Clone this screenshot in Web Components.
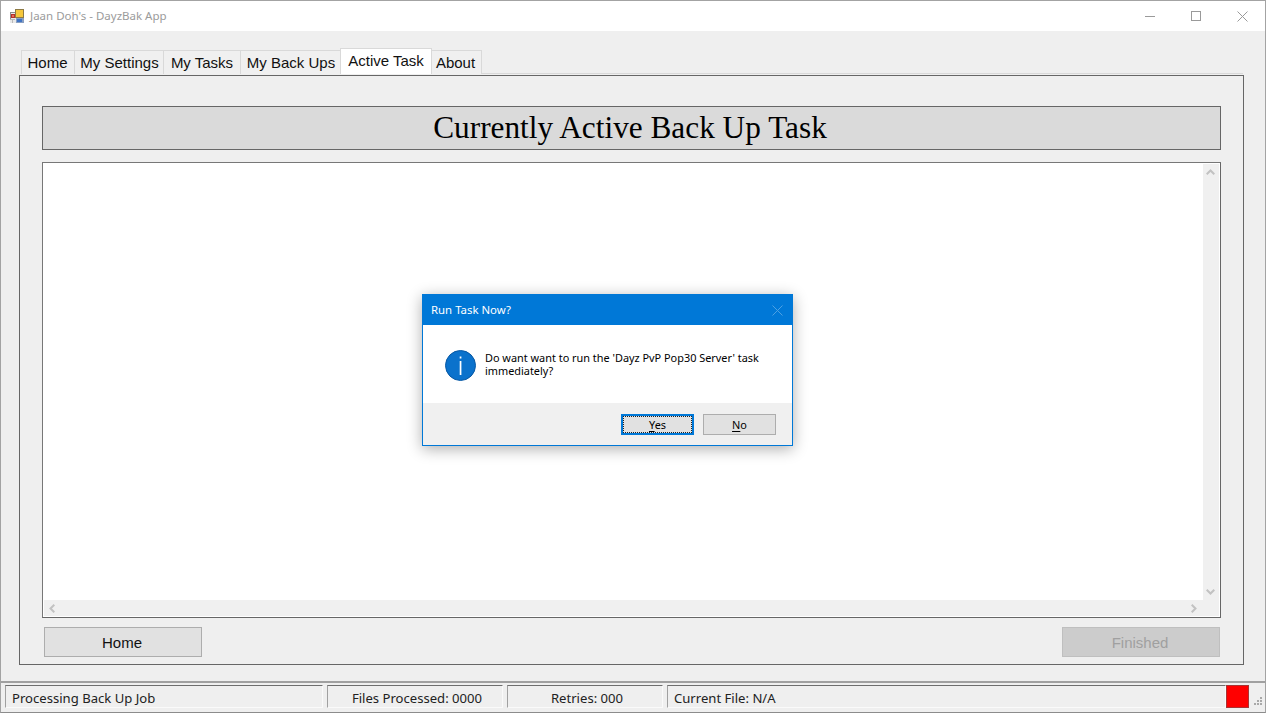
<!DOCTYPE html>
<html>
<head>
<meta charset="utf-8">
<title>DayzBak App</title>
<style>
    html, body { margin: 0; height: 100%; overflow: hidden; background: #f0f0f0; }
</style>
</head>
<body>
<app-window>
    <title-bar slot="title">Jaan Doh's - DayzBak App</title-bar>
    <tab-strip slot="tabs">
        <tab-item style="width:54px;padding-right:1px">Home</tab-item>
        <tab-item style="width:90px;padding-left:1px">My Settings</tab-item>
        <tab-item style="width:78px">My Tasks</tab-item>
        <tab-item style="width:101px;padding-left:1px">My Back Ups</tab-item>
        <tab-item style="width:92px" active>Active Task</tab-item>
        <tab-item style="width:51px;padding-right:2px">About</tab-item>
    </tab-strip>
    <task-panel slot="panel">
        <flat-button slot="left">Home</flat-button>
        <flat-button slot="right" disabled>Finished</flat-button>
    </task-panel>
    <status-strip slot="status">
        <status-label style="width:318px" align="left">Processing Back Up Job</status-label>
        <status-label style="width:176px">Files Processed: 0000</status-label>
        <status-label style="width:156px">Retries: 000</status-label>
        <status-label style="width:559px" align="left">Current File: N/A</status-label>
    </status-strip>
</app-window>
<message-box heading="Run Task Now?">
    Do want want to run the 'Dayz PvP Pop30 Server' task immediately?
</message-box>

<script>
class AppWindow extends HTMLElement {
    constructor() {
        super();
        this.attachShadow({ mode: 'open' });
        this.shadowRoot.innerHTML = `
        <style>
            :host {
                display: flex;
                flex-direction: column;
                box-sizing: border-box;
                width: 1266px;
                height: 713px;
                border: 1px solid #a3a3a3;
                border-bottom-color: #8c8c8c;
                background: #efefef;
            }
            .main { flex: 1; display: flex; flex-direction: column; min-height: 0; padding: 17px 22px 17px 18px; }
        </style>
        <slot name="title"></slot>
        <div class="main">
            <slot name="tabs"></slot>
            <slot name="panel"></slot>
        </div>
        <slot name="status"></slot>
        `;
    }
}

class TitleBar extends HTMLElement {
    constructor() {
        super();
        this.attachShadow({ mode: 'open' });
        this.shadowRoot.innerHTML = `
        <style>
            :host {
                display: flex;
                align-items: center;
                height: 30px;
                flex: none;
                background: #fff;
                color: #9b9b9b;
                font: 11.5px "Noto Sans", sans-serif;
            }
            .icon { margin-left: 9px; margin-right: 6px; }
            .text { flex: 1; position: relative; top: -1px; }
            .ctl { width: 46px; height: 30px; display: flex; align-items: center; justify-content: center; }
        </style>
        <svg class="icon" width="14" height="14" viewBox="0 0 14 14" shape-rendering="crispEdges">
            <rect x="0" y="3" width="6" height="11" fill="#e9e9e9"/>
            <rect x="0" y="3" width="6" height="1" fill="#8c8c8c"/>
            <rect x="0" y="3" width="1" height="7" fill="#8c8c8c"/>
            <rect x="5" y="0" width="9" height="9" fill="#8d7a45"/>
            <rect x="6" y="1" width="7" height="7" fill="#f5c73c"/>
            <rect x="1" y="5" width="4" height="4" fill="#b5302a"/>
            <rect x="2" y="6" width="2" height="2" fill="#e66a55"/>
            <rect x="6" y="9" width="8" height="5" fill="#8a9fc0"/>
            <rect x="7" y="10" width="5" height="3" fill="#3f73c4"/>
            <rect x="0" y="10" width="5" height="1" fill="#b9b9b9"/>
            <rect x="2" y="10" width="1" height="4" fill="#b9b9b9"/>
        </svg>
        <span class="text"><slot></slot></span>
        <span class="ctl"><svg width="10" height="10" viewBox="0 0 10 10" shape-rendering="crispEdges"><rect x="0" y="5" width="10" height="1" fill="#9a9a9a"/></svg></span>
        <span class="ctl"><svg width="10" height="10" viewBox="0 0 10 10" shape-rendering="crispEdges"><rect x=".5" y=".5" width="9" height="9" fill="none" stroke="#9a9a9a"/></svg></span>
        <span class="ctl"><svg width="11" height="11" viewBox="0 0 11 11"><path d="M.5.5l10 10M10.5.5l-10 10" fill="none" stroke="#9a9a9a"/></svg></span>
        `;
    }
}

class TabStrip extends HTMLElement {
    constructor() {
        super();
        this.attachShadow({ mode: 'open' });
        this.shadowRoot.innerHTML = `
        <style>
            :host {
                display: flex;
                flex: none;
                align-items: flex-end;
                height: 26px;
                margin-left: 2px;
                box-sizing: border-box;
                border-bottom: 1px solid #d9d9d9;
            }
        </style>
        <slot></slot>
        `;
    }
}

class TabItem extends HTMLElement {
    constructor() {
        super();
        this.attachShadow({ mode: 'open' });
        this.shadowRoot.innerHTML = `
        <style>
            :host {
                display: block;
                flex: none;
                box-sizing: border-box;
                height: 24px;
                margin-bottom: -1px;
                border: 1px solid #d9d9d9;
                border-bottom: 0;
                margin-right: -1px;
                background: #f0f0f0;
                color: #111;
                text-align: center;
                font: 15px/23px "Liberation Sans", sans-serif;
                white-space: nowrap;
            }
            :host([active]) {
                position: relative;
                z-index: 1;
                height: 26px;
                background: #fff;
                line-height: 24px;
            }
        </style>
        <slot></slot>
        `;
    }
}

class TaskPanel extends HTMLElement {
    constructor() {
        super();
        this.attachShadow({ mode: 'open' });
        this.shadowRoot.innerHTML = `
        <style>
            :host {
                display: flex;
                flex-direction: column;
                box-sizing: border-box;
                height: 590px;
                width: 1225px;
                margin-top: 1px;
                padding: 30px 22px 7px 22px;
                border: 1px solid #666;
            }
            .head {
                box-sizing: border-box;
                height: 44px;
                flex: none;
                padding-right: 3px;
                border: 1px solid #666;
                background: #dadada;
                color: #000;
                text-align: center;
                font: 31.3px/41px "Liberation Serif", serif;
            }
            .box {
                box-sizing: border-box;
                height: 456px;
                margin-top: 12px;
                flex: none;
                border: 1px solid #777;
                border-right-color: #666;
                border-bottom-color: #666;
                background: #fff;
                padding: 1px 0 0 1px;
                display: grid;
                grid-template-columns: 1fr 17px;
                grid-template-rows: 1fr 17px;
            }
            .content { background: #fff; }
            .bar { background: #f0f0f0; display: flex; justify-content: space-between; align-items: center; }
            .v { flex-direction: column; padding: 5px 2px 5px 0; margin-right: 1px; }
            .h { padding: 0 6px 0 5px; margin-bottom: 1px; }
            .corner { background: #f0f0f0; margin: 0 1px 1px 0; }
            .btns { display: flex; justify-content: space-between; padding: 9px 1px 0 2px; }
        </style>
        <div class="head">Currently Active Back Up Task</div>
        <div class="box">
            <div class="content"></div>
            <div class="bar v">
                <svg width="9" height="6" viewBox="0 0 9 6"><path d="M.7 5.3l3.8-3.8 3.8 3.8" fill="none" stroke="#c2c2c2" stroke-width="2"/></svg>
                <svg width="9" height="6" viewBox="0 0 9 6"><path d="M.7.7l3.8 3.8 3.8-3.8" fill="none" stroke="#c2c2c2" stroke-width="2"/></svg>
            </div>
            <div class="bar h">
                <svg width="6" height="9" viewBox="0 0 6 9"><path d="M5.3.7L1.5 4.5l3.8 3.8" fill="none" stroke="#c2c2c2" stroke-width="2"/></svg>
                <svg width="6" height="9" viewBox="0 0 6 9"><path d="M.7.7l3.8 3.8L.7 8.3" fill="none" stroke="#c2c2c2" stroke-width="2"/></svg>
            </div>
            <div class="corner"></div>
        </div>
        <div class="btns">
            <slot name="left"></slot>
            <slot name="right"></slot>
        </div>
        `;
    }
}

class FlatButton extends HTMLElement {
    constructor() {
        super();
        this.attachShadow({ mode: 'open' });
        this.shadowRoot.innerHTML = `
        <style>
            :host {
                display: block;
                box-sizing: border-box;
                width: 158px;
                height: 30px;
                padding-right: 2px;
                border: 1px solid #adadad;
                background: #e1e1e1;
                color: #111;
                text-align: center;
                font: 15px/29px "Liberation Sans", sans-serif;
            }
            :host([disabled]) {
                background: #cccccc;
                border-color: #bfbfbf;
                color: #a0a0a0;
            }
        </style>
        <slot></slot>
        `;
    }
}

class StatusStrip extends HTMLElement {
    constructor() {
        super();
        this.attachShadow({ mode: 'open' });
        this.shadowRoot.innerHTML = `
        <style>
            :host {
                display: flex;
                flex: none;
                box-sizing: border-box;
                height: 31px;
                padding: 2px 0 0 4px;
                gap: 4px;
                border-top: 2px solid #a0a0a0;
            }
            .rest { display: flex; margin-left: -4px; }
            .led {
                box-sizing: border-box;
                width: 23px;
                height: 23px;
                background: #ff0000;
                border: 1px solid #a83434;
            }
            .grip { width: 15px; height: 23px; display: flex; align-items: flex-end; justify-content: flex-end; }
        </style>
        <slot></slot>
        <div class="rest">
            <div class="led"></div>
            <div class="grip">
                <svg width="11" height="11" viewBox="0 0 11 11" shape-rendering="crispEdges" style="margin:0 1px 2px 0">
                    <path d="M8 2h2v2H8zM5 5h2v2H5zM8 5h2v2H8zM2 8h2v2H2zM5 8h2v2H5zM8 8h2v2H8z" fill="#a9a9a9"/>
                </svg>
            </div>
        </div>
        `;
    }
}

class StatusLabel extends HTMLElement {
    constructor() {
        super();
        this.attachShadow({ mode: 'open' });
        this.shadowRoot.innerHTML = `
        <style>
            :host {
                display: block;
                flex: none;
                box-sizing: border-box;
                height: 23px;
                padding: 0 4px 0 8px;
                border: 1px solid;
                border-color: #6e6e6e #fafafa #fafafa #a0a0a0;
                color: #222;
                text-align: center;
                font: 13.1px/24px "Noto Sans", sans-serif;
                white-space: nowrap;
            }
            :host([align="left"]) { text-align: left; padding: 0 6px; }
        </style>
        <slot></slot>
        `;
    }
}

class MessageBox extends HTMLElement {
    constructor() {
        super();
        this.attachShadow({ mode: 'open' });
        this.shadowRoot.innerHTML = `
        <style>
            :host {
                position: absolute;
                left: 422px;
                top: 294px;
                width: 371px;
                height: 152px;
                box-sizing: border-box;
                display: flex;
                flex-direction: column;
                border: 1px solid #0078d7;
                background: #fff;
                box-shadow: 0 3px 14px rgba(0,0,0,.32);
                font: 10.9px "Noto Sans", sans-serif;
            }
            .cap {
                display: flex;
                align-items: center;
                justify-content: space-between;
                height: 30px;
                padding: 0 9px 0 8px;
                background: #0078d7;
                color: #fff;
                font-size: 11.4px;
                flex: none;
            }
            .cap span { position: relative; top: -1px; }
            .body {
                flex: 1;
                display: flex;
                gap: 9px;
                padding: 25px 20px 0 22px;
                color: #000;
                line-height: 13px;
            }
            .msg { padding-top: 1px; }
            .foot {
                flex: none;
                height: 42px;
                display: flex;
                justify-content: flex-end;
                gap: 9px;
                box-sizing: border-box;
                padding: 11px 16px 0 0;
                background: #f0f0f0;
            }
            .btn {
                box-sizing: border-box;
                width: 73px;
                height: 21px;
                border: 1px solid #adadad;
                background: #e1e1e1;
                text-align: center;
                color: #000;
                line-height: 20px;
                position: relative;
            }
            .btn.def { border: 2px solid #0078d7; line-height: 18px; }
            .btn.def::after { content: ""; position: absolute; inset: 0; border: 1px dotted #222; }
            u { text-underline-offset: 2px; }
        </style>
        <div class="cap">
            <span>${this.getAttribute('heading')}</span>
            <svg width="11" height="11" viewBox="0 0 11 11"><path d="M.5.5l10 10M10.5.5l-10 10" fill="none" stroke="#4da1e3"/></svg>
        </div>
        <div class="body">
            <svg width="31" height="31" viewBox="0 0 31 31" style="flex:none">
                <circle cx="15.5" cy="15.5" r="15" fill="#0a6cc4" stroke="#0b5ba6"/>
                <circle cx="15.5" cy="15.5" r="14" fill="#0b72cc"/>
                <rect x="14.7" y="6.5" width="1.7" height="2" fill="#fff"/>
                <rect x="14.7" y="11" width="1.7" height="14" fill="#fff"/>
            </svg>
            <div class="msg"><slot></slot></div>
        </div>
        <div class="foot">
            <div class="btn def"><u>Y</u>es</div>
            <div class="btn"><u>N</u>o</div>
        </div>
        `;
    }
}

customElements.define('app-window', AppWindow);
customElements.define('title-bar', TitleBar);
customElements.define('tab-strip', TabStrip);
customElements.define('tab-item', TabItem);
customElements.define('task-panel', TaskPanel);
customElements.define('flat-button', FlatButton);
customElements.define('status-strip', StatusStrip);
customElements.define('status-label', StatusLabel);
customElements.define('message-box', MessageBox);
</script>
</body>
</html>
